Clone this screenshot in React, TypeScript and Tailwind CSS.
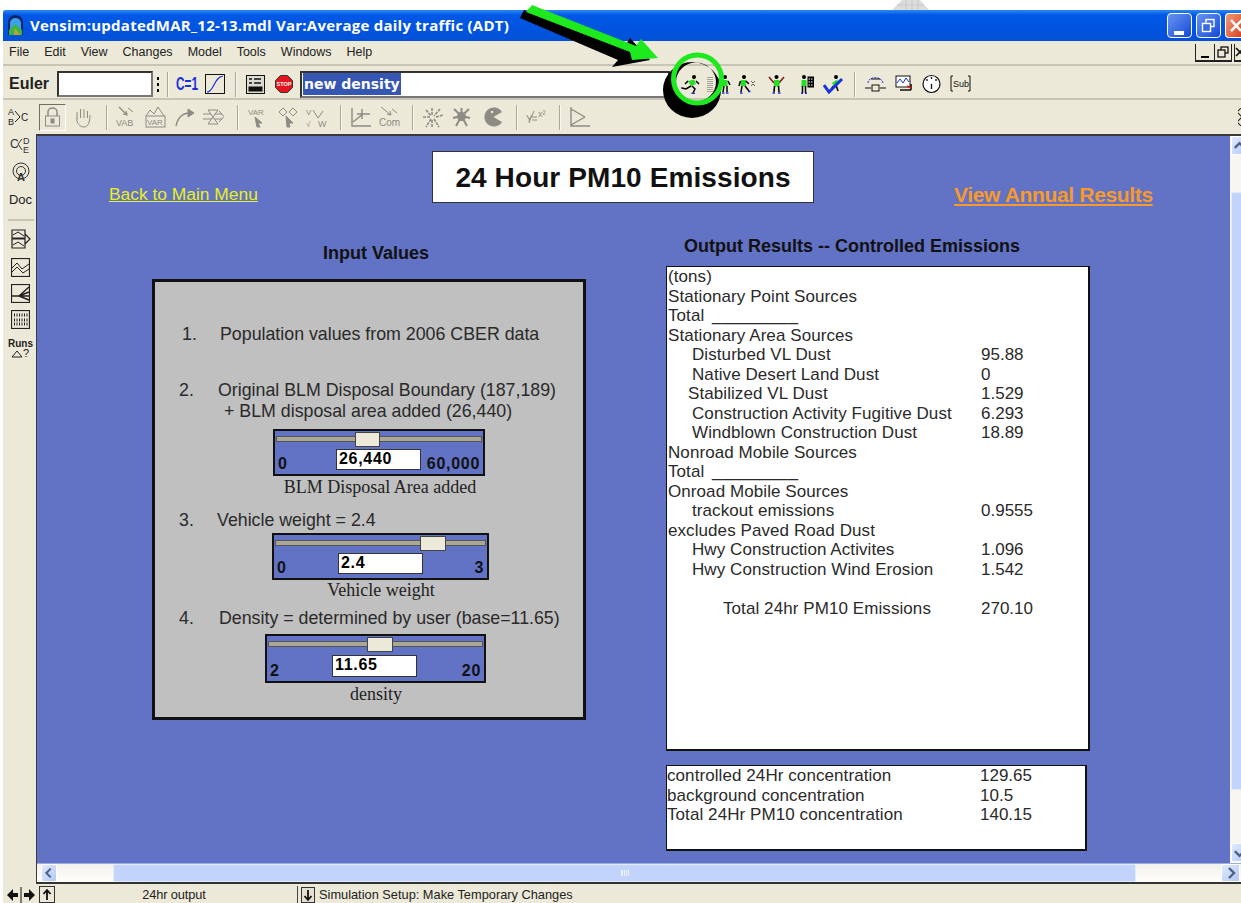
import React from "react";

const SANS = "font-['Liberation_Sans',Arial,sans-serif]";
const GREY = "#8c8c84";

// Shared square toolbar glyph
function Glyph({ w = 20, h = 20, color = GREY, className = "", children }: { w?: number; h?: number; color?: string; className?: string; children: React.ReactNode }) {
  return (
    <svg width={w} height={h} viewBox={`0 0 ${w} ${h}`} fill="none" stroke={color} strokeWidth={1} className={`shrink-0 ${className}`}>
      {children}
    </svg>
  );
}

function Label({ x, y, size = 8, color = GREY, children, weight = 400 }: { x: number; y: number; size?: number; color?: string; children: React.ReactNode; weight?: number }) {
  return (
    <text x={x} y={y} fontSize={size} fill={color} stroke="none" fontWeight={weight} fontFamily="'Liberation Sans',Arial,sans-serif">
      {children}
    </text>
  );
}

function Sep() {
  return <div className="w-[2px] h-[25px] shrink-0 border-l border-[#aca899] bg-white/70" />;
}

// Vensim simulation figure: head, green torso, limbs, blue feet
function Runner({ variant = "run" }: { variant?: "run" | "step" | "arms" | "panel" | "check" | "stand" }) {
  if (variant === "stand")
    return (
      <Glyph w={12} h={20} color="#000">
        <circle cx="6" cy="3" r="2" fill="#000" stroke="none" />
        <rect x="3.5" y="6" width="5" height="6" fill="#22e022" stroke="none" />
        <path d="M9 7 L11 11 M5 12 L4 18 M8 12 L8 18" stroke="#000" strokeWidth="1.5" />
        <path d="M3 19 H5.5 M7 19 H9.5" stroke="#1a2fd0" strokeWidth="1.5" />
      </Glyph>
    );
  if (variant === "arms")
    return (
      <Glyph w={17} h={20} color="#000">
        <circle cx="8.5" cy="3" r="2" fill="#000" stroke="none" />
        <path d="M1 3 L6 9 M16 3 L11 9" stroke="#8b1a1a" strokeWidth="1.6" />
        <rect x="6" y="6" width="5.5" height="6.5" fill="#22e022" stroke="none" />
        <path d="M6.5 12 L6 18 M10.5 12 L11 18" stroke="#000" strokeWidth="1.6" />
        <path d="M4.5 19 H7 M10 19 H12.5" stroke="#1a2fd0" strokeWidth="1.6" />
      </Glyph>
    );
  if (variant === "panel")
    return (
      <Glyph w={16} h={20} color="#000">
        <circle cx="5" cy="3" r="2" fill="#000" stroke="none" />
        <rect x="2.5" y="6" width="5" height="6.5" fill="#22e022" stroke="none" />
        <path d="M3.5 12 V19 M6.5 12 V19" stroke="#000" strokeWidth="1.5" />
        <path d="M2 19.3 H4 M6 19.3 H8" stroke="#1a2fd0" strokeWidth="1.4" />
        <rect x="8.5" y="2.5" width="6.5" height="11" fill="#000" stroke="none" />
        <path d="M9.5 5 H14 M9.5 8 H14 M9.5 11 H14" stroke="#fff" strokeDasharray="1.5 1" />
      </Glyph>
    );
  if (variant === "check")
    return (
      <Glyph w={21} h={20} color="#000">
        <circle cx="13" cy="3" r="2" fill="#000" stroke="none" />
        <path d="M9 9 L14 5.5 L16 10 L11 12 Z" fill="#22e022" stroke="none" />
        <path d="M10 12 L7 18 M13 11 L15 17" stroke="#000" strokeWidth="1.5" />
        <path d="M1 11 L6 18 L19 5" stroke="#1633e0" strokeWidth="3" />
      </Glyph>
    );
  if (variant === "step")
    return (
      <Glyph w={17} h={20} color="#000">
        <circle cx="6" cy="3" r="2" fill="#000" stroke="none" />
        <rect x="3" y="6" width="5" height="6" fill="#22e022" stroke="none" />
        <path d="M2.5 7 L1 12 M8 7 L11 10 M4 12 L3 18 M7 12 L11 17" stroke="#000" strokeWidth="1.5" />
        <path d="M2 19 H4.5 M10 17.5 H12.5" stroke="#1a2fd0" strokeWidth="1.5" />
        <path d="M13 7 L15 9 L17 7 M13 12 L15 10 L17 12" stroke="#555" strokeWidth="0.9" />
      </Glyph>
    );
  return (
    <Glyph w={19} h={20} color="#000">
      <circle cx="13" cy="3" r="2" fill="#000" stroke="none" />
      <path d="M7 7 L13 5.5 L15 10 L10 12 Z" fill="#22e022" stroke="none" />
      <path d="M7 7 L4 10 M15 7 L18 10 M10 12 L5 15 L1 14 M11 12 L14 15 L12 19" stroke="#000" strokeWidth="1.5" />
      <path d="M0 13 V15 M10.5 19.5 H14" stroke="#1a2fd0" strokeWidth="1.5" />
    </Glyph>
  );
}

function TitleBar() {
  return (
    <div className="h-[31px] shrink-0 flex items-center rounded-tl-[3px] bg-linear-to-b from-[#2d88f3] via-[#0058e6] via-[16%] to-[#0251d8] pl-[4px] pr-0">
      <svg width="17" height="21" viewBox="0 0 17 21" className="shrink-0">
        <path d="M1 20 V7 a7.5 7 0 0 1 15 0 V20 Z" fill="#06246e" />
        <path d="M3 20 V8 a5.5 5 0 0 1 11 0 V20 Z" fill="#3ea0e8" />
        <path d="M2 20 L2 15 L8 9 L15 15 V20 Z" fill="#3bb54a" />
        <path d="M7 20 L8 13 L13 20 Z" fill="#c8a030" />
      </svg>
      <div className="ml-[6px] text-white font-bold text-[15px] tracking-[0.25px] whitespace-nowrap font-['Open_Sans',sans-serif]">
        Vensim:updatedMAR_12-13.mdl Var:Average daily traffic (ADT)
      </div>
      <div className="ml-auto flex gap-[4px] items-center">
        <div className="relative w-[25px] h-[25px] rounded-[4px] border border-white bg-linear-to-br from-[#6a93f0] to-[#1546d8]">
          <div className="absolute left-[6px] top-[17px] w-[10px] h-[4px] bg-white" />
        </div>
        <div className="w-[25px] h-[25px] rounded-[4px] border border-white bg-linear-to-br from-[#6a93f0] to-[#1546d8] flex items-center justify-center">
          <svg width="15" height="15" viewBox="0 0 15 15" fill="none" stroke="#fff" strokeWidth="1.4">
            <rect x="5" y="1.5" width="8" height="7" />
            <rect x="1.5" y="5.5" width="8" height="8" fill="#3a6ae0" />
          </svg>
        </div>
        <div className="w-[16px] h-[25px] rounded-l-[4px] border-y border-l border-white bg-linear-to-br from-[#ee9a78] to-[#d8401c] overflow-hidden">
          <svg width="16" height="23" viewBox="0 0 16 23" fill="none" stroke="#fff" strokeWidth="2.6">
            <path d="M5 6 L15 17 M16 6 L5 17" />
          </svg>
        </div>
      </div>
    </div>
  );
}

function MenuBar() {
  const items = ["File", "Edit", "View", "Changes", "Model", "Tools", "Windows", "Help"];
  return (
    <div className={`h-[25px] shrink-0 flex items-center pl-[6px] text-[12.5px] text-[#222] border-b-2 border-[#c8c5b4] ${SANS}`}>
      <div className="flex gap-[15px]">
        {items.map((m) => (
          <span key={m}>{m}</span>
        ))}
      </div>
      <div className="ml-auto flex items-center mr-[-1px]">
        <div className="w-[19px] h-[18px] border-b-2 border-l border-[#222] flex items-end justify-center pb-[2px]">
          <div className="w-[8px] h-[2px] bg-black" />
        </div>
        <div className="w-[18px] h-[18px] border-b-2 border-x border-[#222] flex items-center justify-center">
          <svg width="12" height="12" viewBox="0 0 12 12" fill="none" stroke="#111" strokeWidth="1.3">
            <rect x="4" y="1" width="7" height="6" />
            <rect x="1" y="4" width="7" height="7" fill="#ece9d8" />
          </svg>
        </div>
        <div className="ml-[2px] w-[8px] h-[18px] border-b-2 border-l border-[#222] overflow-hidden">
          <svg width="10" height="14" viewBox="0 0 10 14" stroke="#111" strokeWidth="1.6">
            <path d="M1 4 L9 12 M9 4 L1 12" />
          </svg>
        </div>
      </div>
    </div>
  );
}

function SimToolbar() {
  return (
    <div className={`h-[34px] shrink-0 flex items-center pl-[6px] pt-[4px] border-b-2 border-[#c8c5b4] ${SANS}`}>
      <span className="w-[48px] font-bold text-[16px] text-[#222]">Euler</span>
      <div className="w-[96px] h-[26px] bg-white border-2 border-[#333] border-b-[#777] border-r-[#777]" />
      <div className="ml-[4px] flex flex-col gap-[3px]">
        <div className="w-[2px] h-[3px] bg-black" />
        <div className="w-[2px] h-[3px] bg-black" />
        <div className="w-[2px] h-[3px] bg-black" />
      </div>
      <div className="ml-[8px]"><Sep /></div>
      <span className="ml-[7px] w-[20px] whitespace-nowrap origin-left scale-x-[0.62] text-[#1b2fd8] font-bold text-[19px] leading-[20px]">C=1</span>
      <Glyph w={20} h={20} color="#111" className="ml-[9px]">
        <rect x="0.5" y="0.5" width="19" height="19" />
        <path d="M2 18 C9 18 9 3 18 2" stroke="#1b2fd8" strokeWidth="1.2" />
      </Glyph>
      <div className="ml-[10px]"><Sep /></div>
      <Glyph w={19} h={19} color="#111" className="ml-[9px]">
        <rect x="0.5" y="0.5" width="18" height="18" fill="#dcdcd0" />
        <path d="M3 4 H6 M8 4 H15 M3 8 H6 M8 8 H15" strokeWidth="1.6" />
        <rect x="3" y="12" width="13" height="4" fill="#111" />
      </Glyph>
      <svg width="18" height="18" viewBox="0 0 18 18" className="ml-[10px] shrink-0">
        <path d="M5.5 0.5 H12.5 L17.5 5.5 V12.5 L12.5 17.5 H5.5 L0.5 12.5 V5.5 Z" fill="#e2161c" stroke="#333" />
        <text x="9" y="11" fontSize="5.5" fontWeight="700" textAnchor="middle" fill="#fff" fontFamily="'Liberation Sans',sans-serif">STOP</text>
      </svg>
      <div className="ml-[7px] w-[370px] h-[27px] shrink-0 bg-white border-2 border-[#333] border-b-[#777] flex items-center pl-px">
        <span className="bg-[#3656b4] text-white font-bold text-[14px] leading-[22px] font-['DejaVu_Sans',sans-serif] px-px">new density</span>
      </div>
      <div className="ml-[11px]"><Runner /></div>
      <div className="ml-[7px] flex flex-col gap-px">
        {[0, 1, 2, 3, 4, 5, 6, 7].map((i) => (
          <div key={i} className="w-[6px] h-px bg-[#a5a396]" />
        ))}
      </div>
      <div className="ml-[6px]"><Runner variant="stand" /></div>
      <div className="ml-[7px]"><Runner variant="step" /></div>
      <div className="ml-[13px]"><Runner variant="arms" /></div>
      <div className="ml-[14px]"><Runner variant="panel" /></div>
      <div className="ml-[8px]"><Runner variant="check" /></div>
      <div className="ml-[10px]"><Sep /></div>
      <Glyph w={21} h={20} color="#111" className="ml-[9px]">
        <path d="M3 9 C3 2 17 2 18 9" stroke="#1b2fd8" strokeDasharray="2 1" />
        <rect x="7" y="11" width="7" height="6" />
        <path d="M0 14 H6 M15 14 H21" />
        <path d="M6 5 H15" />
      </Glyph>
      <Glyph w={18} h={18} color="#111" className="ml-[9px]">
        <rect x="1" y="1" width="14" height="11" fill="#fff" />
        <path d="M2 8 L5 4 L8 8 L11 3 L14 7" stroke="#1b2fd8" />
        <path d="M5 15 H16 M16 9 V15" stroke="#111" strokeWidth="1.6" />
        <path d="M12 11 L16 13" stroke="#e2161c" strokeWidth="1.6" />
      </Glyph>
      <Glyph w={19} h={20} color="#111" className="ml-[9px]">
        <circle cx="9.5" cy="10" r="8.5" fill="#fff" strokeWidth="1.2" />
        <path d="M9.5 10 V15 M5 5 V7 M9.5 3 V5 M14 5 V7" strokeWidth="1.3" />
      </Glyph>
      <Glyph w={21} h={18} color="#111" className="ml-[9px]">
        <path d="M3 1 H1 V16 H3 M18 1 H20 V16 H18" />
        <Label x={3} y={12} size={9} color="#111">Sub</Label>
      </Glyph>
    </div>
  );
}

function EditToolbar() {
  return (
    <div className={`h-[34px] shrink-0 flex items-center pl-[5px] ${SANS}`}>
      <Glyph w={21} h={20} color="#222">
        <Label x={0} y={8} size={9} color="#222">A</Label>
        <Label x={0} y={18} size={9} color="#222">B</Label>
        <Label x={13} y={14} size={10} color="#222">C</Label>
        <path d="M7 4 L12 10 L7 15" />
      </Glyph>
      <div className="ml-[10px] w-[27px] h-[27px] border border-[#6f6f64] border-r-white border-b-white flex items-center justify-center">
        <Glyph w={17} h={20}>
          <path d="M4 9 V5 a4.5 4 0 0 1 9 0 V9" strokeWidth="1.5" />
          <rect x="1.5" y="9" width="14" height="10" />
          <rect x="7" y="12" width="3" height="4" fill={GREY} />
        </Glyph>
      </div>
      <Glyph w={20} h={21} className="ml-[7px]">
        <path d="M4 12 V5 M7.5 11 V2 M11 11 V2 M14.5 11 V4 M4 11 C3 16 7 20 11 20 C15 20 17 15 17 8" />
      </Glyph>
      <div className="ml-[13px]"><Sep /></div>
      <Glyph w={21} h={22} className="ml-[8px]">
        <path d="M3 1 L11 9 M7 8 L11 9 L10 5" strokeWidth="1.2" />
        <path d="M12 2 L17 6" />
        <Label x={0} y={20} size={9}>VAB</Label>
      </Glyph>
      <Glyph w={21} h={22} className="ml-[8px]">
        <path d="M1 10 L5 4 L9 8 L13 1 L19 10" />
        <rect x="1" y="10" width="19" height="11" />
        <Label x={2} y={19} size={8}>VAR</Label>
      </Glyph>
      <Glyph w={20} h={20} className="ml-[9px]">
        <path d="M1 19 C3 10 8 6 15 6" strokeWidth="1.4" />
        <path d="M13 2 L19 6 L13 10 Z" fill={GREY} />
      </Glyph>
      <Glyph w={21} h={20} className="ml-[8px]">
        <path d="M0 7 H19 M0 12 H19 M16 4 L21 9.5 L16 15" />
        <path d="M5 3 L15 3 L5 17 L15 17 Z" fill="#ece9d8" />
      </Glyph>
      <div className="ml-[13px]"><Sep /></div>
      <Glyph w={19} h={21} className="ml-[9px]">
        <Label x={0} y={8} size={8}>VAR</Label>
        <path d="M7 10 L14 16 L10 16 L12 20 L9 20 Z" fill={GREY} />
      </Glyph>
      <Glyph w={20} h={21} className="ml-[11px]">
        <path d="M1 5 L5 1 L9 5 L5 9 Z M11 5 L15 1 L19 5 L15 9 Z" />
        <path d="M8 9 L15 16 L11 16 L12 20 L9 20 Z" fill={GREY} />
      </Glyph>
      <Glyph w={21} h={21} className="ml-[8px]">
        <Label x={0} y={8} size={8}>V</Label>
        <path d="M7 3 L12 11 M17 4 L12 11" />
        <Label x={0} y={20} size={8}>√</Label>
        <Label x={12} y={20} size={9}>W</Label>
      </Glyph>
      <div className="ml-[13px]"><Sep /></div>
      <Glyph w={21} h={21} className="ml-[8px]">
        <path d="M2 1 V19 H21 M3 15 L13 7 L20 7 M12 2 V12 M7 7 H17" strokeWidth="1.4" />
      </Glyph>
      <Glyph w={22} h={22} className="ml-[7px]">
        <path d="M3 1 L13 9 M9 8 L13 9 L12 5 M14 3 L19 7" />
        <Label x={1} y={20} size={10}>Com</Label>
      </Glyph>
      <div className="ml-[12px]"><Sep /></div>
      <Glyph w={21} h={21} className="ml-[8px]">
        <path d="M10 1 L10 8 M1 10 L8 10 M4 3 L9 9 M18 2 L12 9 M14 10 L21 8 M9 12 L4 20 M12 12 L17 20 M10 13 V20" strokeWidth="1.6" strokeDasharray="3 1" />
      </Glyph>
      <Glyph w={19} h={20} className="ml-[9px]">
        <path d="M9.5 9 L2 2 M9.5 9 L17 2 M9.5 9 L1 11 M9.5 9 L18 11 M9.5 9 L4 19 M9.5 9 L15 19 M9.5 9 V1" strokeWidth="2" />
        <circle cx="9.5" cy="9.5" r="4.5" fill={GREY} stroke="none" />
      </Glyph>
      <svg width="20" height="20" viewBox="0 0 20 20" className="ml-[12px] shrink-0">
        <path d="M19 5 A9.5 9.5 0 1 0 19 15 L10.5 10 Z" fill={GREY} />
        <circle cx="9" cy="5" r="1.2" fill="#ece9d8" />
      </svg>
      <div className="ml-[13px]"><Sep /></div>
      <Glyph w={20} h={18} className="ml-[8px]">
        <Label x={0} y={15} size={10}>Y</Label>
        <path d="M6 9 H11 M6 12 H11 M8 3 L3 14" />
        <Label x={12} y={9} size={9}>x²</Label>
      </Glyph>
      <div className="ml-[13px]"><Sep /></div>
      <Glyph w={21} h={22} className="ml-[8px]">
        <path d="M2 1 V20 H21 M2 3 L16 11 M2 19 L16 11" strokeWidth="1.4" />
      </Glyph>
      <div className="ml-auto mr-[-1px] flex flex-col gap-[2px] w-[4px] overflow-hidden">
        <div className="w-[8px] h-[8px] border border-[#222] rotate-45" />
        <div className="w-[8px] h-[8px] border border-[#222] rotate-45" />
      </div>
    </div>
  );
}

function LeftToolbar() {
  return (
    <div className={`w-[33px] shrink-0 flex flex-col items-center pl-[2px] ${SANS}`}>
      <Glyph w={22} h={19} color="#333" className="mt-[1px]">
        <Label x={0} y={13} size={12} color="#333">C</Label>
        <path d="M8 9 L12 4 M8 9 L12 15" />
        <Label x={13} y={9} size={9} color="#333">D</Label>
        <Label x={13} y={18} size={9} color="#333">E</Label>
      </Glyph>
      <Glyph w={20} h={20} color="#333" className="mt-[8px]">
        <circle cx="10" cy="9" r="8" />
        <circle cx="10" cy="9" r="4.5" />
        <Label x={6} y={19} size={11} color="#333" weight={700}>A</Label>
      </Glyph>
      <span className="mt-[11px] text-[13px] leading-[14px] text-[#222]">Doc</span>
      <div className="mt-[12px] w-[26px] h-[2px] bg-[#c8c5b4]" />
      <Glyph w={20} h={20} color="#222" className="mt-[8px]">
        <path d="M1 1 H14 V9 H1 Z M1 10 H14 V19 H1 Z M14 5 L19 10 L14 15" strokeWidth="1.2" />
        <path d="M2 6 L7 3 L13 7 M2 16 L7 13 L13 17" />
      </Glyph>
      <Glyph w={19} h={19} color="#222" className="mt-[9px]">
        <rect x="0.5" y="0.5" width="18" height="18" strokeWidth="1.2" />
        <path d="M1 10 L6 5 L11 11 L18 6 M1 14 L6 9 L12 15 L18 11" />
      </Glyph>
      <Glyph w={19} h={19} color="#222" className="mt-[7px]">
        <rect x="0.5" y="0.5" width="18" height="18" strokeWidth="1.2" />
        <path d="M1 12 H8 L18 3 M8 12 L18 8 M8 12 H18 M8 12 L18 16" strokeWidth="1.4" />
      </Glyph>
      <Glyph w={19} h={19} color="#222" className="mt-[7px]">
        <rect x="0.5" y="0.5" width="18" height="18" strokeWidth="1.2" />
        <path d="M3 5 H17 M3 10 H17 M3 14 H17" strokeWidth="3" strokeDasharray="1 1.5" />
      </Glyph>
      <div className="mt-[10px] flex flex-col items-center text-[#222]">
        <span className="text-[10px] leading-[9px] font-bold">Runs</span>
        <Glyph w={20} h={10} color="#222">
          <path d="M1 9 L6 3 L11 9 Z" />
          <Label x={12} y={9} size={11} color="#222">?</Label>
        </Glyph>
      </div>
    </div>
  );
}

function Slider({ width, height, ml, value, min, max, thumb, thumbW, inputLeft, inputTop, inputH }: { width: number; height: number; ml: string; value: string; min: string; max: string; thumb: number; thumbW: number; inputLeft: number; inputTop: number; inputH: number }) {
  return (
    <div className={`relative shrink-0 border-2 border-[#111] bg-[#6272c4] ${ml}`} style={{ width, height }}>
      <div className="mx-[1px] mt-[5px] h-[6px] bg-[#aaa795] border border-[#555]" />
      <div className="absolute top-[1px] h-[15px] bg-[#ece9d8] border border-[#444]" style={{ left: thumb, width: thumbW }} />
      <div className={`absolute bg-white border border-[#333] pl-[2px] font-bold text-[16px] leading-[17px] tracking-[0.7px] text-black ${SANS}`} style={{ left: inputLeft, top: inputTop, width: 85, height: inputH }}>
        {value}
      </div>
      <div className={`absolute left-[3px] right-[3px] bottom-[1px] flex justify-between font-bold text-[16px] leading-[18px] tracking-[0.7px] text-[#111] ${SANS}`}>
        <span>{min}</span>
        <span>{max}</span>
      </div>
    </div>
  );
}

function Numbered({ n, left, textLeft, children, mt }: { n: string; left: number; textLeft: number; children: React.ReactNode; mt: string }) {
  return (
    <div className={`relative h-[20px] shrink-0 text-[17.8px] leading-[20px] text-[#2a2a2a] whitespace-nowrap ${mt}`}>
      <span className="absolute" style={{ left }}>{n}</span>
      <span className="absolute" style={{ left: textLeft }}>{children}</span>
    </div>
  );
}

function Caption({ children, center, mt }: { children: React.ReactNode; center: number; mt: string }) {
  return (
    <div className={`relative h-[20px] shrink-0 ${mt}`}>
      <span className="absolute -translate-x-1/2 text-[18px] leading-[20px] text-[#222] whitespace-nowrap font-['Liberation_Serif',serif]" style={{ left: center }}>
        {children}
      </span>
    </div>
  );
}

function InputPanel() {
  return (
    <div className={`absolute left-[115px] top-[143px] w-[434px] h-[441px] bg-[#c0c0c0] border-[3px] border-[#111] flex flex-col ${SANS}`}>
      <Numbered n="1." left={27} textLeft={65} mt="mt-[42px]">Population values from 2006 CBER data</Numbered>
      <Numbered n="2." left={24} textLeft={63} mt="mt-[36px]">Original BLM Disposal Boundary (187,189)</Numbered>
      <Numbered n="" left={0} textLeft={69} mt="mt-[1px]">+ BLM disposal area added (26,440)</Numbered>
      <Slider width={212} height={47} ml="ml-[118px] mt-[8px]" value="26,440" min="0" max="60,000" thumb={80} thumbW={25} inputLeft={61} inputTop={18} inputH={21} />
      <Caption center={225} mt="mt-[1px]">BLM Disposal Area added</Caption>
      <Numbered n="3." left={24} textLeft={62} mt="mt-[13px]">Vehicle weight = 2.4</Numbered>
      <Slider width={217} height={47} ml="ml-[117px] mt-[3px]" value="2.4" min="0" max="3" thumb={146} thumbW={26} inputLeft={64} inputTop={18} inputH={21} />
      <Caption center={226} mt="mt-0">Vehicle weight</Caption>
      <Numbered n="4." left={24} textLeft={64} mt="mt-[8px]">Density = determined by user (base=11.65)</Numbered>
      <Slider width={221} height={49} ml="ml-[110px] mt-[6px]" value="11.65" min="2" max="20" thumb={100} thumbW={26} inputLeft={65} inputTop={19} inputH={22} />
      <Caption center={221} mt="mt-[1px]">density</Caption>
    </div>
  );
}

const rows: [string, string, string?][] = [
  ["pl-0", "(tons)"],
  ["pl-0", "Stationary Point Sources"],
  ["pl-0 [word-spacing:3px]", "Total _________"],
  ["pl-0", "Stationary Area Sources"],
  ["pl-[24px]", "Disturbed VL Dust", "95.88"],
  ["pl-[24px]", "Native Desert Land Dust", "0"],
  ["pl-[20px]", "Stabilized VL Dust", "1.529"],
  ["pl-[24px]", "Construction Activity Fugitive Dust", "6.293"],
  ["pl-[24px]", "Windblown Construction Dust", "18.89"],
  ["pl-0", "Nonroad Mobile Sources"],
  ["pl-0 [word-spacing:3px]", "Total _________"],
  ["pl-0", "Onroad Mobile Sources"],
  ["pl-[24px]", "trackout emissions", "0.9555"],
  ["pl-0", "excludes Paved Road Dust"],
  ["pl-[24px]", "Hwy Construction Activites", "1.096"],
  ["pl-[24px]", "Hwy Construction Wind Erosion", "1.542"],
  ["pl-0", "\u00a0"],
  ["pl-[55px]", "Total 24hr PM10 Emissions", "270.10"],
];

const totals: [string, string][] = [
  ["controlled 24Hr concentration", "129.65"],
  ["background concentration", "10.5"],
  ["Total 24Hr PM10 concentration", "140.15"],
];

function Row({ pad, label, value }: { pad: string; label: string; value?: string }) {
  return (
    <div className="grid grid-cols-[313px_1fr] h-[19.5px] leading-[19.5px] whitespace-nowrap">
      <span className={`${pad} tracking-[0.08px]`}>{label}</span>
      <span>{value}</span>
    </div>
  );
}

function Canvas() {
  return (
    <div className="relative flex-1 bg-[#6272c4] overflow-hidden">
      <div className={`absolute left-[395px] top-[15px] w-[382px] h-[52px] bg-white border border-[#333] flex items-center justify-center pt-[1px] font-bold text-[28px] text-[#111] tracking-[0.1px] ${SANS}`}>
        24 Hour PM10 Emissions
      </div>
      <a className={`absolute left-[72px] top-[45px] text-[17.4px] text-[#e8f020] underline ${SANS}`}>Back to Main Menu</a>
      <a className={`absolute left-[917px] top-[43px] text-[21px] font-bold text-[#f79a2a] underline tracking-[-0.35px] ${SANS}`}>View Annual Results</a>
      <div className={`absolute left-[286px] top-[104px] font-bold text-[18px] text-[#111] ${SANS}`}>Input Values</div>
      <div className={`absolute left-[647px] top-[97px] font-bold text-[18px] text-[#111] ${SANS}`}>Output Results -- Controlled Emissions</div>
      <InputPanel />
      <div className={`absolute left-[629px] top-[130px] w-[424px] h-[485px] bg-white border border-r-2 border-b-2 border-[#111] pl-[1px] text-[17px] text-[#2a2a2a] ${SANS}`}>
        {rows.map(([pad, label, value], i) => (
          <Row key={i} pad={pad} label={label} value={value} />
        ))}
      </div>
      <div className={`absolute left-[629px] top-[629px] w-[421px] h-[86px] bg-white border border-r-2 border-b-2 border-[#111] text-[17px] text-[#2a2a2a] ${SANS}`}>
        {totals.map(([label, value]) => (
          <Row key={label} pad="pl-0" label={label} value={value} />
        ))}
      </div>
    </div>
  );
}

function ScrollBtn({ dir, className = "" }: { dir: "left" | "right" | "up" | "down"; className?: string }) {
  const paths = { left: "M10 3 L5 8 L10 13", right: "M6 3 L11 8 L6 13", up: "M3 10 L8 5 L13 10", down: "M3 6 L8 11 L13 6" };
  return (
    <div className={`flex items-center justify-center rounded-[2px] border border-white bg-linear-to-br from-[#e1eafe] to-[#b4c8f6] shrink-0 ${className}`}>
      <svg width="16" height="16" viewBox="0 0 16 16" fill="none" stroke="#4d6185" strokeWidth="2.4">
        <path d={paths[dir]} />
      </svg>
    </div>
  );
}

function HScroll() {
  return (
    <div className="h-[21px] shrink-0 flex items-center bg-linear-to-b from-[#f3f1ec] to-[#fefefb] border-t border-[#9fb0e0] border-b-2 border-b-[#333] pl-[4px] pr-[1px]">
      <ScrollBtn dir="left" className="w-[16px] h-[18px]" />
      <div className="ml-[56px] w-[1023px] h-[18px] rounded-[2px] border border-[#e2eafe] bg-[#c2d3fc] flex items-center justify-center">
        <div className="w-[8px] h-[6px] border-x border-[#eef3ff] bg-[repeating-linear-gradient(90deg,#eef3ff_0,#eef3ff_1px,transparent_1px,transparent_2px)]" />
      </div>
      <ScrollBtn dir="right" className="ml-auto w-[19px] h-[18px]" />
    </div>
  );
}

function VScroll() {
  return (
    <div className="w-[11px] shrink-0 flex flex-col bg-[#f7f6f0] pl-[1px] overflow-hidden">
      <ScrollBtn dir="up" className="w-[17px] h-[19px]" />
      <div className="mt-[37px] w-[16px] h-[598px] rounded-[2px] border border-[#e2eafe] bg-[#c2d3fc]" />
      <ScrollBtn dir="down" className="mt-[53px] w-[17px] h-[19px]" />
    </div>
  );
}

function StatusBar() {
  return (
    <div className={`h-[19px] shrink-0 flex items-center pt-[2px] text-[12.8px] text-[#222] ${SANS}`}>
      <svg width="30" height="16" viewBox="0 0 30 16" fill="#111" className="ml-[3px] shrink-0">
        <path d="M1 8 L7 2 V6 H12 V10 H7 V14 Z" />
        <path d="M29 8 L23 2 V6 H18 V10 H23 V14 Z" />
        <rect x="14.5" y="0" width="1" height="16" />
      </svg>
      <div className="ml-[3px] w-[16px] h-[17px] border border-[#333] flex items-center justify-center">
        <svg width="12" height="14" viewBox="0 0 12 14" fill="none" stroke="#111" strokeWidth="1.3">
          <path d="M6 12 V3 M2.5 6 L6 2 L9.5 6" strokeWidth="1.8" />
        </svg>
      </div>
      <div className="w-[242px] pr-[4px] text-center tracking-[-0.1px]">24hr output</div>
      <div className="w-[1px] h-[17px] bg-[#444]" />
      <div className="ml-[3px] w-[14px] h-[16px] border border-[#333] bg-[#e3e0cf] flex items-center justify-center">
        <svg width="12" height="14" viewBox="0 0 12 14" fill="none" stroke="#111" strokeWidth="1.8">
          <path d="M6 2 V11 M2.5 8 L6 12 L9.5 8" />
        </svg>
      </div>
      <span className="ml-[4px] whitespace-nowrap">Simulation Setup: Make Temporary Changes</span>
    </div>
  );
}

// Callout marking the run button: shadowed arrow and ring over the toolbar
function Callout() {
  return (
    <svg width="1241" height="130" viewBox="0 0 1241 130" className="absolute left-0 top-0 pointer-events-none">
      <path d="M524 10 L520 18 L618 60 L612 67 L650 60 L630 38 L625 46 Z" fill="#000" />
      <path d="M532 5 L526 12 L630 52 L632 60 L658 58 L641 39 L636 46 Z" fill="#1ee81e" />
      <path
        fillRule="evenodd"
        fill="#000"
        d="M663 90 a29 28 0 1 0 58 0 a29 28 0 1 0 -58 0 Z M676 82 a20 19.5 0 1 0 40 0 a20 19.5 0 1 0 -40 0 Z"
      />
      <circle cx="697.5" cy="79" r="24" fill="none" stroke="#1ee81e" strokeWidth="5" />
    </svg>
  );
}

export default function App() {
  return (
    <div className="relative w-[1241px] h-[903px] bg-white overflow-hidden">
      <div className="h-[10px] pl-[892px]">
        <svg width="37" height="10" viewBox="0 0 37 10">
          <path d="M10 0 H28 L37 10 H0 Z" fill="#dcdcdc" />
          <path d="M14 0 V10 M20 0 V10 M26 0 V10 M5 5 H32" stroke="#c8c8c8" />
        </svg>
      </div>
      <div className="ml-[3px] h-[893px] flex flex-col bg-[#ece9d8]">
        <TitleBar />
        <MenuBar />
        <SimToolbar />
        <EditToolbar />
        <div className="flex-1 min-h-0 flex">
          <LeftToolbar />
          <div className="flex-1 min-w-0 flex flex-col border-t-2 border-l border-[#3a3a3a]">
            <div className="flex-1 min-h-0 flex">
              <Canvas />
              <VScroll />
            </div>
            <HScroll />
          </div>
        </div>
        <StatusBar />
      </div>
      <Callout />
    </div>
  );
}
